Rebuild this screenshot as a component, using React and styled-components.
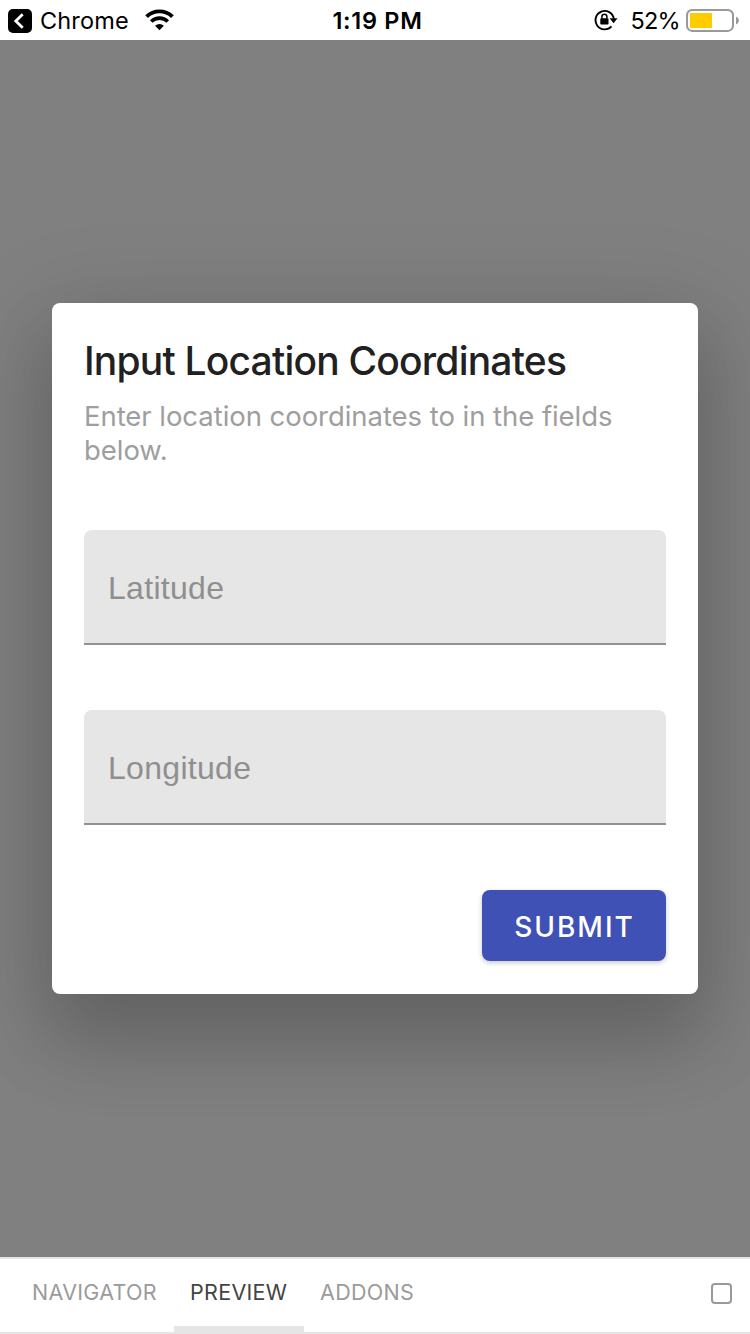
import React from "react";
import styled, { createGlobalStyle } from "styled-components";

const GlobalStyle = createGlobalStyle`
  *, *::before, *::after { box-sizing: border-box; }
  body { margin: 0; background: #fff; font-family: Inter, "Liberation Sans", sans-serif; }
`;

const Screen = styled.div`
  display: flex;
  flex-direction: column;
  width: 750px;
  height: 1334px;
  overflow: hidden;
`;

const StatusBar = styled.header`
  display: grid;
  grid-template-columns: 1fr auto 1fr;
  align-items: center;
  flex: none;
  height: 40px;
  padding: 0 11px 0 8px;
  background: #fff;
  color: #000;
`;

const StatusGroup = styled.div`
  display: flex;
  align-items: center;
  justify-content: ${(p) => (p.$end ? "flex-end" : "flex-start")};
  height: 40px;
`;

const StatusText = styled.span`
  padding: 2px 0 0 ${(p) => p.$left || 0}px;
  font-size: 23.5px;
  font-weight: ${(p) => p.$weight || 400};
  line-height: 38px;
  letter-spacing: ${(p) => p.$spacing || 0}px;
  white-space: nowrap;
`;

const Icon = styled.svg`
  display: block;
  flex: none;
  margin-top: ${(p) => p.$top || 0}px;
  margin-left: ${(p) => p.$left || 0}px;
  margin-right: ${(p) => p.$right || 0}px;
`;

const Backdrop = styled.main`
  display: flex;
  flex-direction: column;
  align-items: center;
  flex: none;
  height: 1217px;
  padding-top: 263px;
  overflow: hidden;
  background: #808080;
`;

const Dialog = styled.form`
  display: flex;
  flex-direction: column;
  width: 646px;
  height: 691px;
  padding: 32px;
  border-radius: 8px;
  background: #fff;
  box-shadow:
    0 48px 76px 6px rgba(0, 0, 0, 0.14),
    0 18px 92px 16px rgba(0, 0, 0, 0.12);
`;

const Title = styled.h2`
  margin: 0;
  height: 64px;
  font-size: 39px;
  font-weight: 500;
  line-height: 51px;
  letter-spacing: -0.8px;
  color: #212121;
  white-space: nowrap;
`;

const Description = styled.p`
  margin: 0 0 63px;
  height: 68px;
  font-size: 27.5px;
  line-height: 34px;
  letter-spacing: -0.05px;
  color: #9e9e9e;
`;

const Field = styled.label`
  display: flex;
  align-items: center;
  flex: none;
  height: 115px;
  margin-bottom: 65px;
  padding: 3px 24px 0;
  border-bottom: 2px solid #919191;
  border-radius: 8px 8px 0 0;
  background: #e6e6e6;
`;

const Input = styled.input`
  width: 100%;
  padding: 0;
  border: 0;
  outline: 0;
  background: transparent;
  font: 400 32px "Liberation Sans", Arial, sans-serif;
  letter-spacing: 0.3px;
  color: #212121;
  &::placeholder { color: #8f8f8f; opacity: 1; }
`;

const SubmitButton = styled.button`
  align-self: flex-end;
  width: 184px;
  height: 71px;
  padding: 2px 0 0 1px;
  border: 0;
  border-radius: 8px;
  background: #3f51b5;
  box-shadow: 0 2px 5px rgba(0, 0, 0, 0.22);
  font: 500 28px Inter, sans-serif;
  letter-spacing: 2px;
  color: #fff;
`;

const TabBar = styled.nav`
  display: flex;
  align-items: stretch;
  flex: none;
  height: 77px;
  padding: 0 18px 0 16px;
  border-top: 2px solid #e5e5e5;
  border-bottom: 2px solid #e5e5e5;
  background: #fff;
`;

const Tab = styled.a`
  display: block;
  width: ${(p) => p.$width}px;
  padding-left: 16px;
  font-size: 21.5px;
  line-height: 67px;
  letter-spacing: 0.3px;
  color: ${(p) => (p.$active ? "#444" : "#9b9b9b")};
  border-bottom: 6px solid ${(p) => (p.$active ? "#e5e5e5" : "transparent")};
  white-space: nowrap;
`;

const PanelToggle = styled.button`
  width: 21px;
  height: 21px;
  margin: 24px 0 0 auto;
  padding: 0;
  border: 2px solid #999;
  border-radius: 4px;
  background: #fff;
`;

const BackIcon = () => (
  <Icon width="24" height="24" viewBox="0 0 24 24" $top={2} $right={8}>
    <rect width="24" height="24" rx="5" />
    <path d="M14.7 5.2 7.8 12l6.9 6.8" fill="none" stroke="#fff" strokeWidth="2.8" />
  </Icon>
);

const WifiIcon = () => (
  <Icon width="29" height="22" viewBox="0 0 29 22" $left={16}>
    <g fill="none" stroke="#000">
      <path d="M1.6 7.6a18.6 18.6 0 0 1 25.8 0" strokeWidth="3.9" />
      <path d="M6.2 12.5a12 12 0 0 1 16.6 0" strokeWidth="3.6" />
    </g>
    <path d="M10.1 16.7a6.3 6.3 0 0 1 8.8 0L14.5 21.2Z" />
  </Icon>
);

const RotationLockIcon = () => (
  <Icon width="24" height="22" viewBox="0 0 24 22" $right={12}>
    <path d="M17.5 17.4A9.2 9.2 0 1 1 19.8 9.6" fill="none" stroke="#000" strokeWidth="1.9" />
    <path d="M15.6 9.2h7.9l-3.9 5.1Z" />
    <rect x="6.3" y="9.2" width="8.2" height="6.4" rx="0.8" />
    <path d="M7.9 9.7V7.8a2.5 2.5 0 0 1 5 0v1.9" fill="none" stroke="#000" strokeWidth="1.5" />
  </Icon>
);

const BatteryIcon = () => (
  <Icon width="53" height="24" viewBox="0 0 53 24" $left={6}>
    <rect x="1" y="1.9" width="46" height="21" rx="5.2" fill="#fff" stroke="#999" strokeWidth="2" />
    <rect x="4" y="5" width="22" height="15" fill="#fc0" />
    <path d="M50 8.4q3 1.5 3 4t-3 4Z" fill="#999" />
  </Icon>
);

export default function App() {
  return (
    <>
      <GlobalStyle />
      <Screen>
        <StatusBar>
          <StatusGroup>
            <BackIcon />
            <StatusText $spacing={0.15}>Chrome</StatusText>
            <WifiIcon />
          </StatusGroup>
          <StatusText $weight={600} $spacing={0.7} $left={8}>1:19 PM</StatusText>
          <StatusGroup $end>
            <RotationLockIcon />
            <StatusText $spacing={-0.7}>52%</StatusText>
            <BatteryIcon />
          </StatusGroup>
        </StatusBar>
        <Backdrop>
          <Dialog>
            <Title>Input Location Coordinates</Title>
            <Description>Enter location coordinates to in the fields below.</Description>
            <Field><Input placeholder="Latitude" aria-label="Latitude" /></Field>
            <Field><Input placeholder="Longitude" aria-label="Longitude" /></Field>
            <SubmitButton type="button">SUBMIT</SubmitButton>
          </Dialog>
        </Backdrop>
        <TabBar>
          <Tab $width={158}>NAVIGATOR</Tab>
          <Tab $width={130} $active>PREVIEW</Tab>
          <Tab $width={130}>ADDONS</Tab>
          <PanelToggle type="button" aria-label="Toggle panel" />
        </TabBar>
      </Screen>
    </>
  );
}
